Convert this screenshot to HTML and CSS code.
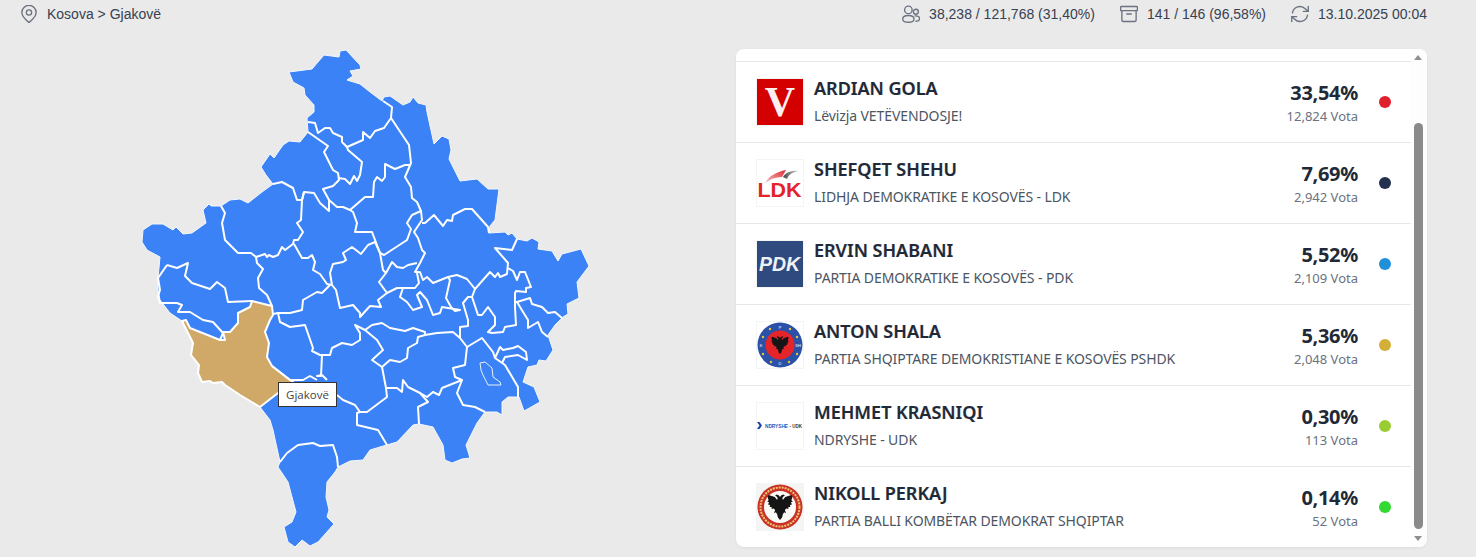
FILE: index.html
```html
<!DOCTYPE html>
<html lang="sq">
<head>
<meta charset="utf-8">
<title>Kosova &gt; Gjakovë</title>
<link rel="stylesheet" href="styles.css">
</head>
<body>
<svg class="defs" aria-hidden="true">
  <defs>
    <symbol id="eagle" viewBox="-50 0 100 100">
      <path id="eagle-half" d="M0 12 4 6 12 2 19 6 13 10 9 15 11 23 20 12 44 4 48 10 44 24 49 30 42 32 46 40 38 42 40 50 32 50 32 58 24 56 19 62 23 74 16 70 11 78 8 90 0 100z"/>
      <use href="#eagle-half" transform="scale(-1 1)"/>
    </symbol>
    <linearGradient id="fade-red" x1="0" y1="1" x2="1" y2="0">
      <stop offset="0" stop-color="#f7c4c6"/>
      <stop offset="1" stop-color="#e0282e"/>
    </linearGradient>
    <linearGradient id="fade-grey" x1="0" y1="0" x2="1" y2="0">
      <stop offset="0" stop-color="#444"/>
      <stop offset="1" stop-color="#ddd"/>
    </linearGradient>
  </defs>
</svg>
<header class="topbar">
  <div class="crumb">
    <svg class="ico" viewBox="0 0 24 24"><path d="M12 23.500S2.500 15.500 2.500 10a9.500 9.500 0 0 1 19 0c0 5.500-9.500 13.500-9.500 13.500z"/><circle cx="12" cy="10" r="3.500"/></svg>
    <span>Kosova &gt; Gjakovë</span>
  </div>
  <div class="stats">
    <div class="stat">
      <svg class="ico" viewBox="0 0 24 24"><circle cx="8.500" cy="6.500" r="5"/><circle cx="18.500" cy="9" r="3.300"/><path d="M8.500 14C4 14 1 16 1 18.500S4 23 8.500 23s7.500-2 7.500-4.500S13 14 8.500 14z"/><path d="M17.500 14.500c3.500-.3 6 1.300 6 3.500 0 2-2 3.500-5 3.700"/></svg>
      <span>38,238 / 121,768 (31,40%)</span>
    </div>
    <div class="stat">
      <svg class="ico" viewBox="0 0 24 24"><rect x=".8" y="2" width="22.400" height="5.500" rx="1"/><path d="M2.500 7.500V20a2 2 0 0 0 2 2h15a2 2 0 0 0 2-2V7.500"/><path d="M9 12h6"/></svg>
      <span>141 / 146 (96,58%)</span>
    </div>
    <div class="stat">
      <svg class="ico" viewBox="0 0 24 24"><path d="M23 2v6.500h-6.500"/><path d="M1 22v-6.500h6.500"/><path d="M2 10.500A10 10 0 0 1 19 5l4 3.500"/><path d="M22 13.500A10 10 0 0 1 5 19l-4-3.500"/></svg>
      <span>13.10.2025 00:04</span>
    </div>
  </div>
</header>

<main class="content">
  <section class="map">
    <svg class="map-svg" viewBox="0 28 736 529">
      <polygon class="land" points="346,50 360,65 361,69 350,71 353,76 347,80 360,84 370,92 382,101 384,97 390,96 403,105 410,102 413,97 418,103 426,105 427,112 434,144 442,136 449,139 451,150 449,159 460,181 477,179 488,189 499,189 495,220 490,226 489,233 505,232 508,235 512,233 517,239 527,241 532,238 539,242 538,249 552,251 558,261 562,254 581,249 589,266 577,282 579,298 567,304 568,314 563,317 555,325 548,335 553,350 546,361 539,360 537,365 528,367 523,382 534,387 540,402 524,411 519,397 508,397 502,402 502,415 497,412 485,412 477,423 466,445 470,458 462,459 452,463 445,460 443,445 433,427 419,424 413,425 397,442 380,447 370,450 363,460 350,461 338,467 335,472 327,482 326,497 329,510 327,517 334,524 318,542 310,546 302,540 295,547 288,542 284,527 292,522 296,512 288,482 278,467 280,462 273,430 270,420 260,407 240,395 225,385 222,382 213,383 210,381 202,382 198,373 199,365 191,355 193,343 182,321 170,313 160,300 158,290 158,278 160,257 147,250 142,242 143,230 152,224 163,224 173,230 176,227 183,234 192,233 206,223 203,210 209,204 211,206 221,206 230,200 240,199 248,203 262,192 273,184 266,175 261,167 270,154 274,158 283,145 289,141 300,142 308,132 307,118 314,112 314,105 305,95 304,88 293,82 289,72 312,69 324,55 339,57 340,51"/>
      <polygon class="gold" points="182,321 186,320 190,328 220,340 225,340 223,332 230,332 238,323 238,313 250,307 252,301 272,306 273,315 270,320 265,332 269,343 267,357 272,366 290,380 296,384 278,393 260,407 240,395 225,385 222,382 213,383 210,381 202,382 198,373 199,365 191,355 193,343"/>
      <g class="borders">
        <polyline points="308,122 315,123 318,133 325,128 330,128 333,133 342,137 342,142 347,147 363,140 363,132 370,138 375,131 384,128 391,118 392,107 383,101"/>
        <polyline points="391,118 409,145 411,163 405,177 411,187 412,198 417,202 421,211 422,220 414,232 418,238 422,250 425,253 420,263 415,272 420,272 423,280 427,277 433,283 448,277 457,275 467,279 475,289 490,272 495,277 498,273 500,277 507,274 508,263 495,248 512,250 517,239"/>
        <polyline points="421,211 412,215 407,223 411,229 407,240 384,255 380,253 372,232 355,232 357,223 353,212 350,210 343,207 337,207 329,200"/>
        <polyline points="422,223 425,223 434,215 443,226 447,220 452,221 453,215 465,209 472,209 488,227 489,233"/>
        <polyline points="410,165 405,165 395,169 385,164 385,177 382,181 377,177 374,182 373,197 365,197 350,210"/>
        <polyline points="308,132 328,146 324,152 333,170 338,173 339,180 333,186 323,189 329,200 329,211 320,203 314,193 304,192 302,200 297,200 293,188 282,182 273,184"/>
        <polyline points="304,192 302,200 301,220 297,223 303,232 298,240 294,240 293,244 285,250 282,247 278,255 273,257 269,255 267,257 265,254 256,257 251,253 238,253 225,240 222,223 225,213 221,206"/>
        <polyline points="256,257 257,263 263,269 258,278 259,288 267,295 272,306"/>
        <polyline points="338,178 345,179 350,184 354,176 357,181 360,175 362,162 348,150 347,147"/>
        <polyline points="167,265 177,268 188,263 185,276 192,283 210,289 217,282 225,288 228,302 252,301"/>
        <polyline points="167,265 158,278 160,290 158,296 160,303 170,303 177,303 182,305 178,312 190,312 203,320 213,322 223,333 220,340"/>
        <polyline points="273,314 278,313 290,313 302,310 303,300 317,292 322,293 330,285"/>
        <polyline points="278,313 280,322 290,327 305,325 313,348 312,351 320,355 330,355 332,348 342,343 352,345 360,340 360,333 355,325 365,330 372,325 382,323 390,328 405,331 413,328 425,332 425,335 437,333 453,332 460,338 467,347 482,338 493,352 495,358 505,365 518,387 518,397"/>
        <polyline points="322,355 321,376 317,376 322,375 327,380"/>
        <polyline points="272,366 290,380 303,380 310,376 317,380"/>
        <polyline points="337,395 343,400 355,405 360,412 357,413 357,425 378,430 387,445"/>
        <polyline points="360,412 367,412 387,397 386,388 397,388 402,392 403,380 408,387 420,393 427,397 433,392 439,395 442,388 462,380 455,377 453,368 465,365 467,347"/>
        <polyline points="386,388 382,367 372,360 383,350 377,340 365,330"/>
        <polyline points="382,367 390,360 400,362 407,358 408,348 417,343 418,337 425,335"/>
        <polyline points="280,462 287,453 298,445 313,443 320,446 333,445 337,457 338,467"/>
        <polyline points="294,244 302,258 308,258 312,255 315,262 313,270 320,274 327,284 332,285 330,273 333,264 343,262 346,260 343,253 352,247 361,254 368,245 375,242 380,253 383,270 386,273 379,282 387,293 378,300 381,307 370,306 360,317 360,313 353,305 340,308 336,290 332,285"/>
        <polyline points="386,273 392,262 397,267 403,268 408,265 417,263"/>
        <polyline points="387,293 397,288 403,288 400,297 407,302 413,310 422,307 417,295 420,292 427,300 433,315 440,313 442,307 460,310 455,311 451,307 446,298 450,280 448,277"/>
        <polyline points="403,288 415,288 419,283 417,273"/>
        <polyline points="475,289 472,297 468,297 463,303 468,320 468,326 460,327 460,338"/>
        <polyline points="472,297 478,315 482,315 488,307 495,317 495,325 488,332 492,333 503,332 505,327 516,325 515,307 515,293 516,291 526,292 526,288 531,287 525,272 520,272 517,280 513,271 508,268"/>
        <polyline points="515,302 517,302 520,307 528,320 528,328 538,322 542,332 548,337"/>
        <polyline points="517,302 530,298 532,304 542,307 548,313 555,312 562,318"/>
        <polyline points="495,358 500,347 503,350 513,348 518,346 526,352 527,360 518,355 505,357 502,363"/>
        <polyline points="462,380 457,393 463,405 475,407 485,412"/>
        <polyline points="419,424 418,407 428,402 420,393"/>
      </g>
      <polygon class="lake" points="480,363 485,362 492,368 493,377 500,382 501,385 488,385 483,375 481,370"/>
    </svg>
    <div class="tip">Gjakovë</div>
  </section>

  <section class="card">
    <div class="list">
      <div class="sliver"></div>

      <article class="row">
        <div class="logo">
          <svg viewBox="1 1 46 46"><rect x="1" y="1" width="46" height="46" fill="#d40000"/><text x="24" y="38" class="v-text">V</text></svg>
        </div>
        <div class="who"><h3>ARDIAN GOLA</h3><p>Lëvizja VETËVENDOSJE!</p></div>
        <div class="nums"><strong>33,54%</strong><span>12,824 Vota</span></div>
        <i class="dot c1"></i>
      </article>

      <article class="row">
        <div class="logo">
          <svg viewBox="1 1 46 46"><path d="M9 24C13 17 20 13 30 11L26 18C20 18 14 20 9 24z" fill="url(#fade-red)"/><path d="M27 18C30 13 36 11 43 12 37 13 33 15 31 20z" fill="url(#fade-grey)"/><text x="1.500" y="38" textLength="44" lengthAdjust="spacingAndGlyphs" class="ldk-text">LDK</text></svg>
        </div>
        <div class="who"><h3>SHEFQET SHEHU</h3><p>LIDHJA DEMOKRATIKE E KOSOVËS - LDK</p></div>
        <div class="nums"><strong>7,69%</strong><span>2,942 Vota</span></div>
        <i class="dot c2"></i>
      </article>

      <article class="row">
        <div class="logo">
          <svg viewBox="1 1 46 46"><rect x="1" y="1" width="46" height="46" fill="#2f4a7f"/><text x="3" y="31" textLength="41" lengthAdjust="spacingAndGlyphs" class="pdk-text">PDK</text></svg>
        </div>
        <div class="who"><h3>ERVIN SHABANI</h3><p>PARTIA DEMOKRATIKE E KOSOVËS - PDK</p></div>
        <div class="nums"><strong>5,52%</strong><span>2,109 Vota</span></div>
        <i class="dot c3"></i>
      </article>

      <article class="row">
        <div class="logo">
          <svg viewBox="1 1 46 46">
            <circle cx="24" cy="24" r="22.500" fill="#2b50a8"/>
            <circle cx="24" cy="24" r="14.500" fill="#e6252a"/>
            <g fill="#e6c63a"><circle cx="14" cy="8" r="1.200"/><circle cx="34" cy="8" r="1.200"/><circle cx="7" cy="16" r="1.200"/><circle cx="41" cy="16" r="1.200"/><circle cx="7" cy="33" r="1.200"/><circle cx="41" cy="33" r="1.200"/><circle cx="15" cy="41" r="1.200"/><circle cx="33" cy="41" r="1.200"/></g>
            <g class="seal-text"><text x="24" y="8">P</text><text x="24" y="44">D</text><text x="5" y="26">K</text><text x="42" y="26">SH</text></g>
            <use href="#eagle" x="15" y="14" width="18" height="20" class="ink"/>
          </svg>
        </div>
        <div class="who"><h3>ANTON SHALA</h3><p>PARTIA SHQIPTARE DEMOKRISTIANE E KOSOVËS PSHDK</p></div>
        <div class="nums"><strong>5,36%</strong><span>2,048 Vota</span></div>
        <i class="dot c4"></i>
      </article>

      <article class="row">
        <div class="logo">
          <svg viewBox="1 1 46 46"><path d="M1 20H3.500L6 23.500 3.500 27H1L3.500 23.500z" fill="#1d3fa8"/><text x="9" y="26" textLength="23" lengthAdjust="spacingAndGlyphs" class="nd-text">NDRYSHE</text><text x="33.500" y="26" textLength="12.500" lengthAdjust="spacingAndGlyphs" class="ud-text">- UDK</text></svg>
        </div>
        <div class="who"><h3>MEHMET KRASNIQI</h3><p>NDRYSHE - UDK</p></div>
        <div class="nums"><strong>0,30%</strong><span>113 Vota</span></div>
        <i class="dot c5"></i>
      </article>

      <article class="row">
        <div class="logo tint">
          <svg viewBox="1 1 46 46">
            <circle cx="24" cy="24" r="22.500" fill="#c9302a"/>
            <circle class="ring" cx="24" cy="24" r="19.500"/>
            <circle cx="24" cy="24" r="16" fill="#fbfaf5"/>
            <use href="#eagle" x="11" y="10" width="26" height="28" class="ink"/>
          </svg>
        </div>
        <div class="who"><h3>NIKOLL PERKAJ</h3><p>PARTIA BALLI KOMBËTAR DEMOKRAT SHQIPTAR</p></div>
        <div class="nums"><strong>0,14%</strong><span>52 Vota</span></div>
        <i class="dot c6"></i>
      </article>
    </div>

    <div class="scrollbar">
      <span class="arrow up"></span>
      <div class="track"><div class="thumb"></div></div>
      <span class="arrow down"></span>
    </div>
  </section>
</main>
</body>
</html>
```

FILE: styles.css
```css
* { box-sizing: border-box; }

html, body {
  margin: 0;
  height: 557px;
  overflow: hidden;
}

body {
  background: #eaeaea;
  font-family: "Liberation Sans", Arial, sans-serif;
  font-size: 14px;
  color: #374151;
}

.defs {
  display: block;
  width: 0;
  height: 0;
}

.topbar {
  height: 28px;
  display: flex;
  align-items: center;
  justify-content: space-between;
  padding: 0 49px 0 20px;
}

.crumb, .stat, .stats {
  display: flex;
  align-items: center;
}

.crumb { gap: 9px; }
.stats { gap: 25px; }
.stat { gap: 9px; }

.ico {
  width: 18px;
  height: 18px;
  fill: none;
  stroke: #6b7280;
  stroke-width: 1.800;
  stroke-linecap: round;
  stroke-linejoin: round;
  flex: none;
}

.content {
  display: flex;
  height: 529px;
}

.map {
  position: relative;
  width: 736px;
  flex: none;
}

.map-svg {
  display: block;
  width: 736px;
  height: 529px;
}

.land {
  fill: #3b82f6;
  stroke: #f4f7fb;
  stroke-width: 1;
  stroke-linejoin: round;
}

.gold {
  fill: #d0a968;
  stroke: #ffffff;
  stroke-width: 2;
  stroke-linejoin: round;
}

.borders polyline {
  fill: none;
  stroke: #ffffff;
  stroke-width: 2;
  stroke-linejoin: round;
}

.lake {
  fill: #3b82f6;
  stroke: #e6effc;
  stroke-width: 1;
}

.tip {
  position: absolute;
  left: 278px;
  top: 354px;
  width: 59px;
  height: 25px;
  background: #fff;
  border: 1px solid #333;
  font-family: "Open Sans", sans-serif;
  font-size: 11.500px;
  line-height: 23px;
  text-align: center;
  color: #444;
}

.card {
  width: 691px;
  height: 498px;
  margin-top: 21px;
  display: flex;
  background: #fff;
  border-radius: 8px;
  overflow: hidden;
  box-shadow: 0 1px 3px rgba(0, 0, 0, .06);
  font-family: "Noto Sans", "Open Sans", sans-serif;
}

.list {
  flex: 1;
  min-width: 0;
}

.sliver {
  height: 13px;
  border-bottom: 1px solid #e5e7eb;
}

.row {
  height: 81px;
  display: flex;
  align-items: center;
  padding: 0 20px;
  border-bottom: 1px solid #e5e7eb;
}

.row:last-child { border-bottom: 0; height: 80px; }

.logo {
  width: 48px;
  height: 48px;
  flex: none;
  border: 1px solid #f3f4f6;
  margin-right: 10px;
}

.logo.tint { background: #f5f5f3; }

.logo svg {
  display: block;
  width: 46px;
  height: 46px;
}

.who {
  flex: 1;
  min-width: 0;
  padding-bottom: 4px;
}

.who h3 {
  margin: 0;
  font-size: 18px;
  font-weight: 600;
  line-height: 26px;
  color: #1f2937;
  -webkit-text-stroke: .2px #1f2937;
}

.who p {
  margin: 5px 0 0;
  font-size: 14px;
  line-height: 20px;
  letter-spacing: -0.1px;
  color: #4b5563;
}

.nums {
  display: flex;
  flex-direction: column;
  align-items: flex-end;
  padding-top: 2px;
}

.nums strong {
  font-size: 20px;
  font-weight: 700;
  line-height: 26px;
  letter-spacing: -0.3px;
  color: #1f2937;
}

.nums span {
  font-size: 13px;
  line-height: 20px;
  color: #6b7280;
}

.dot {
  width: 12px;
  height: 12px;
  border-radius: 50%;
  margin-left: 21px;
  flex: none;
}

.c1 { background: #e0202b; }
.c2 { background: #24304f; }
.c3 { background: #2090d8; }
.c4 { background: #d4af37; }
.c5 { background: #9acd32; }
.c6 { background: #32d932; }

.scrollbar {
  width: 16px;
  flex: none;
  display: flex;
  flex-direction: column;
  align-items: flex-start;
  background: #fdfdfd;
}

.arrow {
  width: 0;
  height: 0;
  flex: none;
  margin-left: 3px;
  border-left: 4.500px solid transparent;
  border-right: 4.500px solid transparent;
}

.arrow.up {
  border-bottom: 5px solid #8f8f8f;
  margin-top: 6px;
}

.arrow.down {
  border-top: 5px solid #8f8f8f;
  margin-bottom: 6px;
}

.track {
  flex: 1;
  width: 100%;
  padding: 63px 4px 3px 3px;
}

.thumb {
  width: 9px;
  height: 406px;
  background: #8a8a8a;
  border-radius: 5px;
}

.ink { fill: #151515; }

.ring {
  fill: none;
  stroke: #ecc765;
  stroke-width: 2;
  stroke-dasharray: 2 1;
}

.seal-text {
  font-family: "Liberation Sans", sans-serif;
  font-size: 4px;
  fill: #fff;
  text-anchor: middle;
}

.v-text {
  font-family: "Liberation Serif", serif;
  font-weight: 700;
  font-size: 42px;
  fill: #fdf0f0;
  text-anchor: middle;
}

.ldk-text {
  font-family: "Liberation Sans", sans-serif;
  font-weight: 700;
  font-size: 20px;
  fill: #e3232b;
}

.pdk-text {
  font-family: "Liberation Sans", sans-serif;
  font-weight: 700;
  font-style: italic;
  font-size: 20px;
  fill: #eef1f7;
}

.nd-text {
  font-family: "Liberation Sans", sans-serif;
  font-weight: 700;
  font-size: 5.600px;
  fill: #2557b8;
}

.ud-text {
  font-family: "Liberation Sans", sans-serif;
  font-weight: 700;
  font-size: 4.500px;
  fill: #333;
}
```
